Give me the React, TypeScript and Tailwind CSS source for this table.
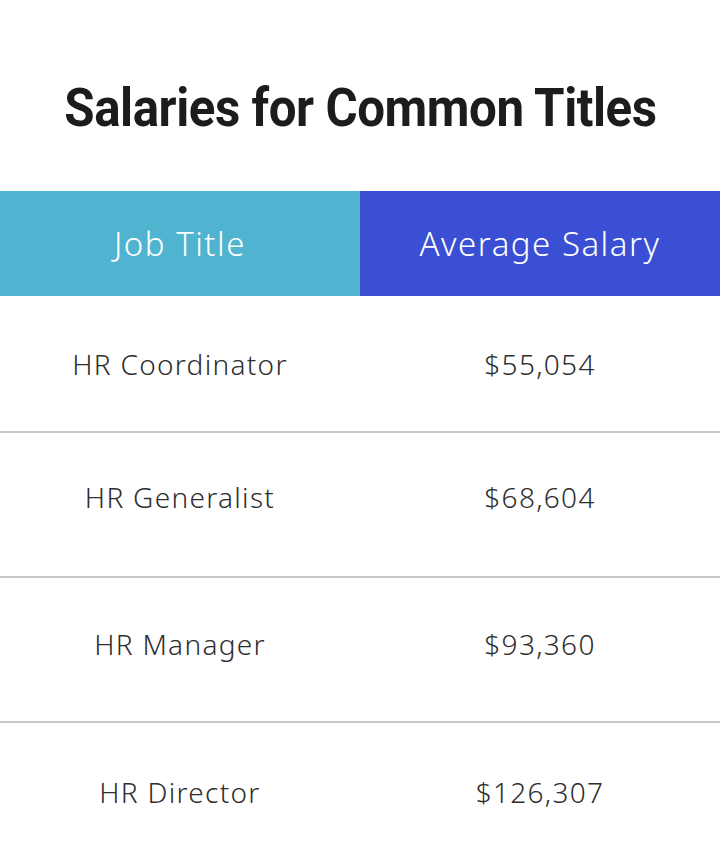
import React from "react";

const rows = [
  { t: "HR Coordinator", s: "$55,054", h: "h-[137px]" },
  { t: "HR Generalist", s: "$68,604", h: "h-[145px] pb-[16px]" },
  { t: "HR Manager", s: "$93,360", h: "h-[145px] pb-[12px]" },
  { t: "HR Director", s: "$126,307", h: "h-[145px] pb-[8px]" },
];

export default function App() {
  return (
    <div className="w-[720px] h-[864px] bg-white overflow-hidden">
      <div className="h-[191px] flex items-center justify-center pt-[26px]">
        <h1
          className="text-[53px] font-bold text-[#1c1c1c] scale-x-[0.93] whitespace-nowrap tracking-[-0.5px]"
          style={{ fontFamily: "Roboto, 'Liberation Sans', sans-serif" }}
        >
          Salaries for Common Titles
        </h1>
      </div>
      <div
        className="grid grid-cols-2 h-[105px] text-white text-[33px] font-light tracking-[1.5px]"
        style={{ fontFamily: "'Noto Sans', Lato, sans-serif" }}
      >
        <div className="bg-[#50b3cf] flex items-center justify-center">Job Title</div>
        <div className="bg-[#3a4fd4] flex items-center justify-center">Average Salary</div>
      </div>
      <div
        style={{ fontFamily: "'Noto Sans', Lato, sans-serif" }}
        className="text-[28px] text-[#2e2e2e] font-light tracking-[1.3px]"
      >
        {rows.map((r, i) => (
          <div
            key={r.t}
            className={`grid grid-cols-2 ${r.h} ${i < rows.length - 1 ? "border-b-2 border-[#c9c9c9]" : ""}`}
          >
            <div className="flex items-center justify-center">{r.t}</div>
            <div className="flex items-center justify-center">{r.s}</div>
          </div>
        ))}
      </div>
    </div>
  );
}
